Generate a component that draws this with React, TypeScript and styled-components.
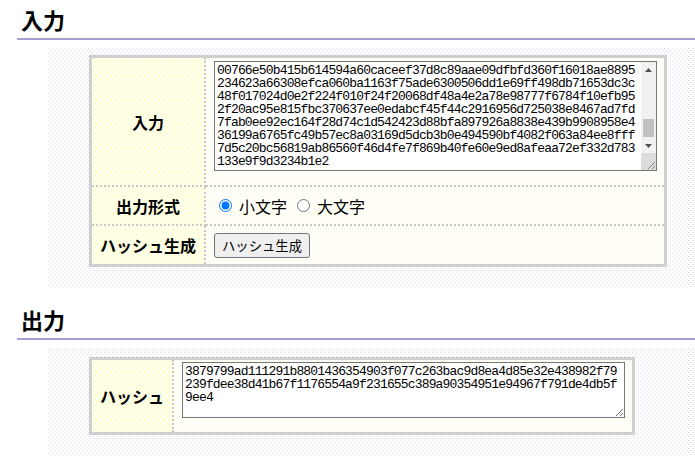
import React, { FunctionComponent, useLayoutEffect, useRef } from 'react';
import styled, { createGlobalStyle } from 'styled-components';

// tiny svg tiles for the page textures
const svgTile = (w: number, h: number, body: string) =>
  `url("data:image/svg+xml,${encodeURIComponent(
    `<svg xmlns='http://www.w3.org/2000/svg' width='${w}' height='${h}'>${body}</svg>`
  )}")`;

const dotTile = (color: string) =>
  svgTile(
    4,
    4,
    `<rect x='0' y='0' width='1' height='1' fill='${color}'/><rect x='2' y='2' width='1' height='1' fill='${color}'/>`
  );

const hatchTile = (color: string) =>
  svgTile(
    6,
    6,
    `<path d='M0 0L6 6M6 0L0 6' stroke='${color}' stroke-width='1' fill='none'/>`
  );

const GlobalStyle = createGlobalStyle`
  body {
    margin: 0;
    background: #fff;
    font-family: "Noto Sans CJK JP", "Noto Sans", sans-serif;
    color: #000;
  }
`;

const Heading = styled.h2<{ $first?: boolean }>`
  margin: ${(p) => (p.$first ? '0' : '13px')} 0 0 17px;
  padding: 4px 0 4px 4px;
  font-size: 22px;
  line-height: 30px;
  font-weight: bold;
  border-bottom: 2px solid #a19fd1;
`;

const Stage = styled.div<{ $top: number }>`
  margin: 8px 0 0 48px;
  padding: ${(p) => p.$top}px 0 20px 41px;
  background-color: #fff;
  background-image: ${dotTile('#d9d7f5')};
`;

const FormTable = styled.table`
  border-collapse: separate;
  border-spacing: 0;
  border: 3px solid #cfcfcf;
`;

const Row = styled.tr<{ $last?: boolean }>`
  & > th,
  & > td {
    border-bottom: ${(p) => (p.$last ? 'none' : '2px dotted #c8c8c8')};
  }
`;

const Label = styled.th`
  padding: 0 8px;
  font-size: 16px;
  font-weight: bold;
  text-align: center;
  vertical-align: middle;
  white-space: nowrap;
  border-right: 2px dotted #c8c8c8;
  background-color: #fffff2;
  background-image: ${hatchTile('#ffffc8')};
`;

const Value = styled.td<{ $pad: string }>`
  padding: ${(p) => p.$pad};
  text-align: left;
  vertical-align: middle;
  background-color: #fff;
  background-image: ${dotTile('#ffffc0')};
`;

const hashFont = `
  font-family: "Liberation Mono", monospace;
  font-size: 13px;
  letter-spacing: -0.84px;
  line-height: 13px;
  color: #000;
`;

const HashBox = styled.textarea<{ $height: number }>`
  display: block;
  box-sizing: border-box;
  width: 443px;
  height: ${(p) => p.$height}px;
  margin: 0;
  padding: 2px;
  border: 1px solid #767676;
  background: #fff;
  ${hashFont}
  resize: both;
  overflow: hidden;
`;

// framed text box with a classic vertical scrollbar beside the text
const ScrollFrame = styled.div<{ $height: number }>`
  display: flex;
  box-sizing: border-box;
  width: 443px;
  height: ${(p) => p.$height}px;
  border: 1px solid #767676;
  background: #fff;
`;

const ScrollText = styled.textarea`
  flex: 1;
  min-width: 0;
  margin: 0;
  padding: 2px;
  border: none;
  outline: none;
  background: transparent;
  ${hashFont}
  resize: none;
  overflow: hidden;
`;

const Rail = styled.div`
  display: flex;
  flex-direction: column;
  width: 15px;
  background: #f1f1f1;
`;

const RailButton = styled.div`
  display: flex;
  align-items: center;
  justify-content: center;
  height: 15px;
  flex: none;
`;

const Track = styled.div`
  flex: 1;
  display: flex;
  flex-direction: column;
  justify-content: flex-end;
  align-items: center;
  padding-bottom: 1px;
`;

const Thumb = styled.div`
  width: 11px;
  height: 18px;
  background: #c1c1c1;
`;

const Corner = styled.div`
  display: flex;
  align-items: flex-end;
  justify-content: flex-end;
  height: 17px;
  flex: none;
  background: #dcdcdc;
`;

const Arrow: FunctionComponent<{ up?: boolean }> = ({ up }) => (
  <svg width="7" height="4" viewBox="0 0 7 4">
    <path d={up ? 'M3.5 0L7 4H0Z' : 'M0 0H7L3.5 4Z'} fill="#505050" />
  </svg>
);

const Grip: FunctionComponent = () => (
  <svg width="12" height="12" viewBox="0 0 12 12">
    <path d="M11 4L4 11M11 8L8 11" stroke="#8a8a8a" strokeWidth="1" fill="none" />
  </svg>
);

const Choices = styled.div`
  display: flex;
  align-items: center;
  height: 23px;
  font-size: 16px;
`;

const Choice = styled.label`
  display: inline-flex;
  align-items: center;
  margin-right: 5px;

  input {
    width: 13px;
    height: 13px;
    margin: 0 7px 0 5px;
  }
`;

const ActionButton = styled.button`
  box-sizing: border-box;
  height: 25px;
  padding: 0 7px;
  border: 1px solid #767676;
  border-radius: 3px;
  background: #efefef;
  font-family: "Noto Sans CJK JP", sans-serif;
  font-size: 13.33px;
  color: #000;
`;

// earlier part of the input text, produced by a small Lehmer generator
const makeHex = (lines: number) => {
  let seed = 20240611;
  const out: string[] = [];
  for (let i = 0; i < lines * 60; i++) {
    seed = (seed * 16807) % 2147483647;
    out.push('0123456789abcdef'[seed % 16]);
  }
  return out.join('');
};

const inputText =
  makeHex(19) +
  '00766e50b415b614594a60caceef37d8c89aae09dfbfd360f16018ae8895' +
  '234623a66308efca060ba1163f75ade6300506dd1e69ff498db71653dc3c' +
  '48f017024d0e2f224f010f24f20068df48a4e2a78e98777f6784f10efb95' +
  '2f20ac95e815fbc370637ee0edabcf45f44c2916956d725038e8467ad7fd' +
  '7fab0ee92ec164f28d74c1d542423d88bfa897926a8838e439b9908958e4' +
  '36199a6765fc49b57ec8a03169d5dcb3b0e494590bf4082f063a84ee8fff' +
  '7d5c20bc56819ab86560f46d4fe7f869b40fe60e9ed8afeaa72ef332d783' +
  '133e9f9d3234b1e2';

const outputText =
  '3879799ad111291b8801436354903f077c263bac9d8ea4d85e32e438982f79' +
  '239fdee38d41b67f1176554a9f231655c389a90354951e94967f791de4db5f' +
  '9ee4';

const InputBox: FunctionComponent = () => {
  const ref = useRef<HTMLTextAreaElement>(null);

  useLayoutEffect(() => {
    if (ref.current) ref.current.scrollTop = ref.current.scrollHeight;
  }, []);

  return (
    <ScrollFrame $height={110}>
      <ScrollText ref={ref} defaultValue={inputText} spellCheck={false} />
      <Rail>
        <RailButton>
          <Arrow up />
        </RailButton>
        <Track>
          <Thumb />
        </Track>
        <RailButton>
          <Arrow />
        </RailButton>
        <Corner>
          <Grip />
        </Corner>
      </Rail>
    </ScrollFrame>
  );
};

export default function App() {
  return (
    <>
      <GlobalStyle />
      <Heading $first>入力</Heading>
      <Stage $top={7}>
        <FormTable>
          <tbody>
            <Row>
              <Label>入力</Label>
              <Value $pad="3px 7px 14px 8px">
                <InputBox />
              </Value>
            </Row>
            <Row>
              <Label>出力形式</Label>
              <Value $pad="7px 7px 7px 8px">
                <Choices>
                  <Choice>
                    <input type="radio" name="case" defaultChecked />
                    小文字
                  </Choice>
                  <Choice>
                    <input type="radio" name="case" />
                    大文字
                  </Choice>
                </Choices>
              </Value>
            </Row>
            <Row $last>
              <Label>ハッシュ生成</Label>
              <Value $pad="6px 7px 6px 8px">
                <ActionButton type="button">ハッシュ生成</ActionButton>
              </Value>
            </Row>
          </tbody>
        </FormTable>
      </Stage>

      <Heading>出力</Heading>
      <Stage $top={9}>
        <FormTable>
          <tbody>
            <Row $last>
              <Label>ハッシュ</Label>
              <Value $pad="2px 7px 14px 8px">
                <HashBox $height={56} defaultValue={outputText} readOnly spellCheck={false} />
              </Value>
            </Row>
          </tbody>
        </FormTable>
      </Stage>
    </>
  );
}
